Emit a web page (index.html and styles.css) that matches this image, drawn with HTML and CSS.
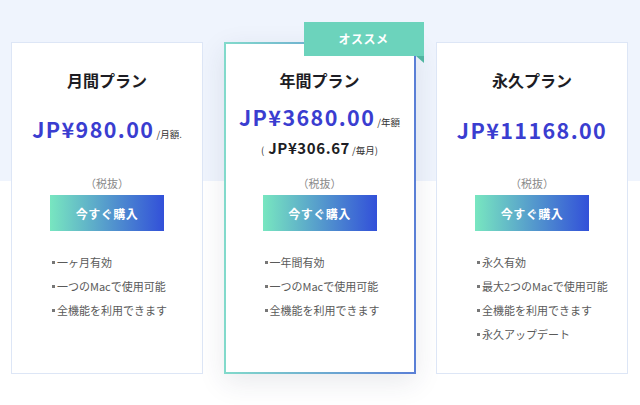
FILE: index.html
```html
<!DOCTYPE html>
<html lang="ja">
<head>
<meta charset="utf-8">
<link rel="stylesheet" href="styles.css">
</head>
<body>
<div class="page">
  <div class="cards">
    <div class="card">
      <h2 class="title">月間プラン</h2>
      <div class="price-area">
        <div class="price"><span class="amount">JP¥980.00</span><span class="unit">/月額.</span></div>
      </div>
      <div class="tax">（税抜）</div>
      <a class="buy">今すぐ購入</a>
      <ul class="features">
        <li>一ヶ月有効</li>
        <li>一つのMacで使用可能</li>
        <li>全機能を利用できます</li>
      </ul>
    </div>
    <div class="card featured">
      <div class="badge">オススメ</div>
      <h2 class="title">年間プラン</h2>
      <div class="price-area">
        <div class="price"><span class="amount">JP¥3680.00</span><span class="unit">/年額</span></div>
        <div class="sub-price"><span class="unit">(</span><span class="sub-amount">JP¥306.67</span><span class="unit">/毎月)</span></div>
      </div>
      <div class="tax">（税抜）</div>
      <a class="buy">今すぐ購入</a>
      <ul class="features">
        <li>一年間有効</li>
        <li>一つのMacで使用可能</li>
        <li>全機能を利用できます</li>
      </ul>
    </div>
    <div class="card">
      <h2 class="title">永久プラン</h2>
      <div class="price-area">
        <div class="price"><span class="amount">JP¥11168.00</span></div>
      </div>
      <div class="tax">（税抜）</div>
      <a class="buy">今すぐ購入</a>
      <ul class="features">
        <li>永久有効</li>
        <li>最大2つのMacで使用可能</li>
        <li>全機能を利用できます</li>
        <li>永久アップデート</li>
      </ul>
    </div>
  </div>
</div>
</body>
</html>
```

FILE: styles.css
```css
* { box-sizing: border-box; }
html, body { margin: 0; padding: 0; }
body {
  width: 640px;
  height: 405px;
  overflow: hidden;
  font-family: "Noto Sans CJK JP", "Noto Sans", sans-serif;
  background: linear-gradient(#eff4fd 0, #eff4fd 181px, #ffffff 181px);
}
.page { padding: 42px 12px 0 11px; }
.cards {
  display: flex;
  gap: 20.5px;
}
.card {
  position: relative;
  width: 192px;
  height: 332px;
  background: #fff;
  border: 1px solid #dde6f6;
  padding-top: 25px;
  display: flex;
  flex-direction: column;
  align-items: center;
}
.card.featured {
  border: 2px solid transparent;
  border-image: linear-gradient(to right, #82dacb, #5a7fd6) 1;
  box-shadow: 0 8px 26px rgba(40, 50, 80, 0.10);
  padding-top: 24px;
}
.badge {
  position: absolute;
  left: 78px;
  top: -22px;
  width: 120px;
  height: 34px;
  background: #6cd3bc;
  color: #fff;
  font-weight: 700;
  font-size: 12px;
  line-height: 34px;
  text-align: center;
  letter-spacing: 0.5px;
}
.badge::after {
  content: "";
  position: absolute;
  right: 0;
  top: 34px;
  border-top: 7px solid #50b5a1;
  border-left: 8px solid transparent;
}
.title {
  margin: 0;
  font-size: 16px;
  line-height: 24px;
  font-weight: 700;
  color: #1d1d24;
}
.price-area {
  height: 78px;
  display: flex;
  flex-direction: column;
  justify-content: center;
  align-items: center;
  gap: 1px;
}
.price { white-space: nowrap; line-height: 28px; }
.amount {
  font-size: 21.5px;
  font-weight: 700;
  color: #3a3dd0;
  letter-spacing: 1.4px;
}
.unit {
  font-size: 9.5px;
  color: #333;
  margin-left: 2px;
}
.sub-price { white-space: nowrap; line-height: 20px; }
.sub-price .unit:first-child { margin: 0 4px 0 0; }
.sub-amount {
  font-size: 15px;
  font-weight: 700;
  color: #1d1d24;
  letter-spacing: 0.6px;
}
.tax {
  margin-top: 5px;
  font-size: 11px;
  line-height: 16px;
  color: #8a8a8a;
}
.buy {
  margin-top: 4px;
  width: 114px;
  height: 36px;
  display: flex;
  align-items: center;
  justify-content: center;
  background: linear-gradient(to right, #78e6c0, #3250d9);
  color: #fff;
  font-weight: 700;
  font-size: 12px;
  letter-spacing: 0.5px;
}
.features {
  list-style: none;
  margin: 19px 0 0;
  padding: 0;
  align-self: stretch;
  padding-left: 40px;
}
.featured .features { padding-left: 39px; }
.features li {
  font-size: 11px;
  line-height: 24px;
  color: #5a5a5a;
  display: flex;
  align-items: center;
  gap: 2px;
}
.features li::before {
  content: "";
  width: 3px;
  height: 3px;
  background: #777;
}
```
